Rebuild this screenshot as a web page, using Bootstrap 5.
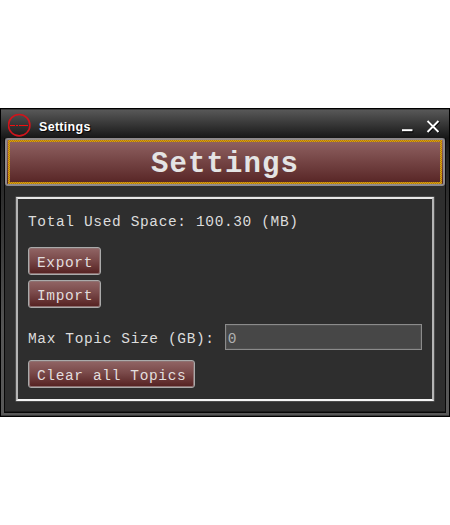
<!DOCTYPE html>
<html lang="en">
<head>
<meta charset="utf-8">
<meta name="viewport" content="width=device-width, initial-scale=1">
<title>Settings</title>
<link href="https://cdn.jsdelivr.net/npm/bootstrap@5.3.0/dist/css/bootstrap.min.css" rel="stylesheet">
<style>
body{background:#fff;height:525px;overflow:hidden;padding-top:108px;font-family:"Courier New","Liberation Mono",monospace;font-size:14.5px;letter-spacing:.63px;line-height:18px;color:#dcdcdc}
.win{height:309px;border:1px solid #000;background:linear-gradient(#5a5a5a,#171717 29px,#222 45px,#555 220px,#585858);box-shadow:inset 0 1px #3c3c3c,inset 0 -1px #3a3a3a}
.titlebar{height:29px;padding:0 8px 0 7px}
.title-text{font:bold 12.5px/14px "Liberation Sans",Arial,sans-serif;color:#fff;margin-left:7px;padding-top:11px;text-shadow:1px 1px 1px #000;letter-spacing:.3px}
.client{margin:0 3px;height:275px;background:#2e2e2e;border:solid #080808;border-width:0 1px 1px;box-shadow:inset 0 -1px #1c1c1c}
.maroon{background:linear-gradient(#916565,#7a4a4a 45%,#542020);border:1px solid #aaa;border-radius:3px;color:#e2dede;box-shadow:inset 0 0 0 1px #8e7070}
.head-btn{height:48px;width:440px;padding:0 1px;border:2px solid #8e8a8c;box-shadow:none}
.head-focus{border:2px solid transparent;background:linear-gradient(#8e6060,#592727) padding-box,repeating-conic-gradient(#e2a400 0 25%,#a8741c 0 50%) 0 0/2px 2px border-box;font-size:29px;letter-spacing:1.1px;line-height:36px;font-weight:bold;color:#e4e4e4;padding-top:5px}
.panel{margin:11px 11px 0 11px;height:204px;border:2px solid;border-color:#e8e8e8 #b4b4b4 #f4f4f4 #b4b4b4;box-shadow:0 0 0 .5px #6a6a6a;padding:14px 9px 0 10px}
.act{height:28px;width:73px;padding:3px 0 0 8px;line-height:18px;letter-spacing:.63px;white-space:pre;text-align:left}
.act-wide{width:167px;margin-top:10px}
.import-gap{margin-top:5px}
.field{width:197px;height:26px;margin-left:10px;padding:5px 2px 2px;border:1px solid #8b8b8b;border-radius:0;background:#474747;color:#b0b0b0;line-height:18px;letter-spacing:.63px;box-shadow:inset 0 0 0 1px #505050;outline:0}
.size-label{padding-top:4px}
</style>
</head>
<body>
<main class="win">
  <header class="titlebar d-flex align-items-start">
    <svg class="flex-shrink-0" width="24" height="29" viewBox="0 0 24 29" fill="none" stroke="#d0141b" aria-hidden="true"><circle cx="11.2" cy="16.2" r="10.7" stroke-width="1.6"/><path d="M2 16.5h5m1 0h2m1 0h9" stroke="#f01010" stroke-width="1.2"/></svg>
    <div class="title-text">Settings</div>
    <svg class="ms-auto flex-shrink-0" width="40" height="28" viewBox="0 0 40 28" fill="none" stroke="#fff" aria-hidden="true"><path d="M1.7 22.1h10.6" stroke="#000" stroke-width="2.6"/><path d="M1 21.2h10.5" stroke-width="2"/><path d="m27 12.5 11 11m0-11-11 11" stroke="#000" stroke-width="2.7"/><path d="m26.5 12 11 11m0-11-11 11" stroke-width="2"/></svg>
  </header>
  <section class="client">
    <div class="maroon head-btn"><div class="head-focus h-100 text-center">Settings</div></div>
    <div class="panel">
      <div class="text-nowrap">Total Used Space: 100.30 (MB)</div>
      <div class="d-flex flex-column align-items-start mt-3">
        <button class="maroon act">Export</button>
        <button class="maroon act import-gap">Import</button>
      </div>
      <div class="d-flex align-items-center mt-3 text-nowrap">
        <label class="size-label" for="size">Max Topic Size (GB):</label>
        <input id="size" class="field" value="0">
      </div>
      <button class="maroon act act-wide">Clear all Topics</button>
    </div>
  </section>
</main>
<script src="https://cdn.jsdelivr.net/npm/bootstrap@5.3.0/dist/js/bootstrap.bundle.min.js"></script>
</body>
</html>
